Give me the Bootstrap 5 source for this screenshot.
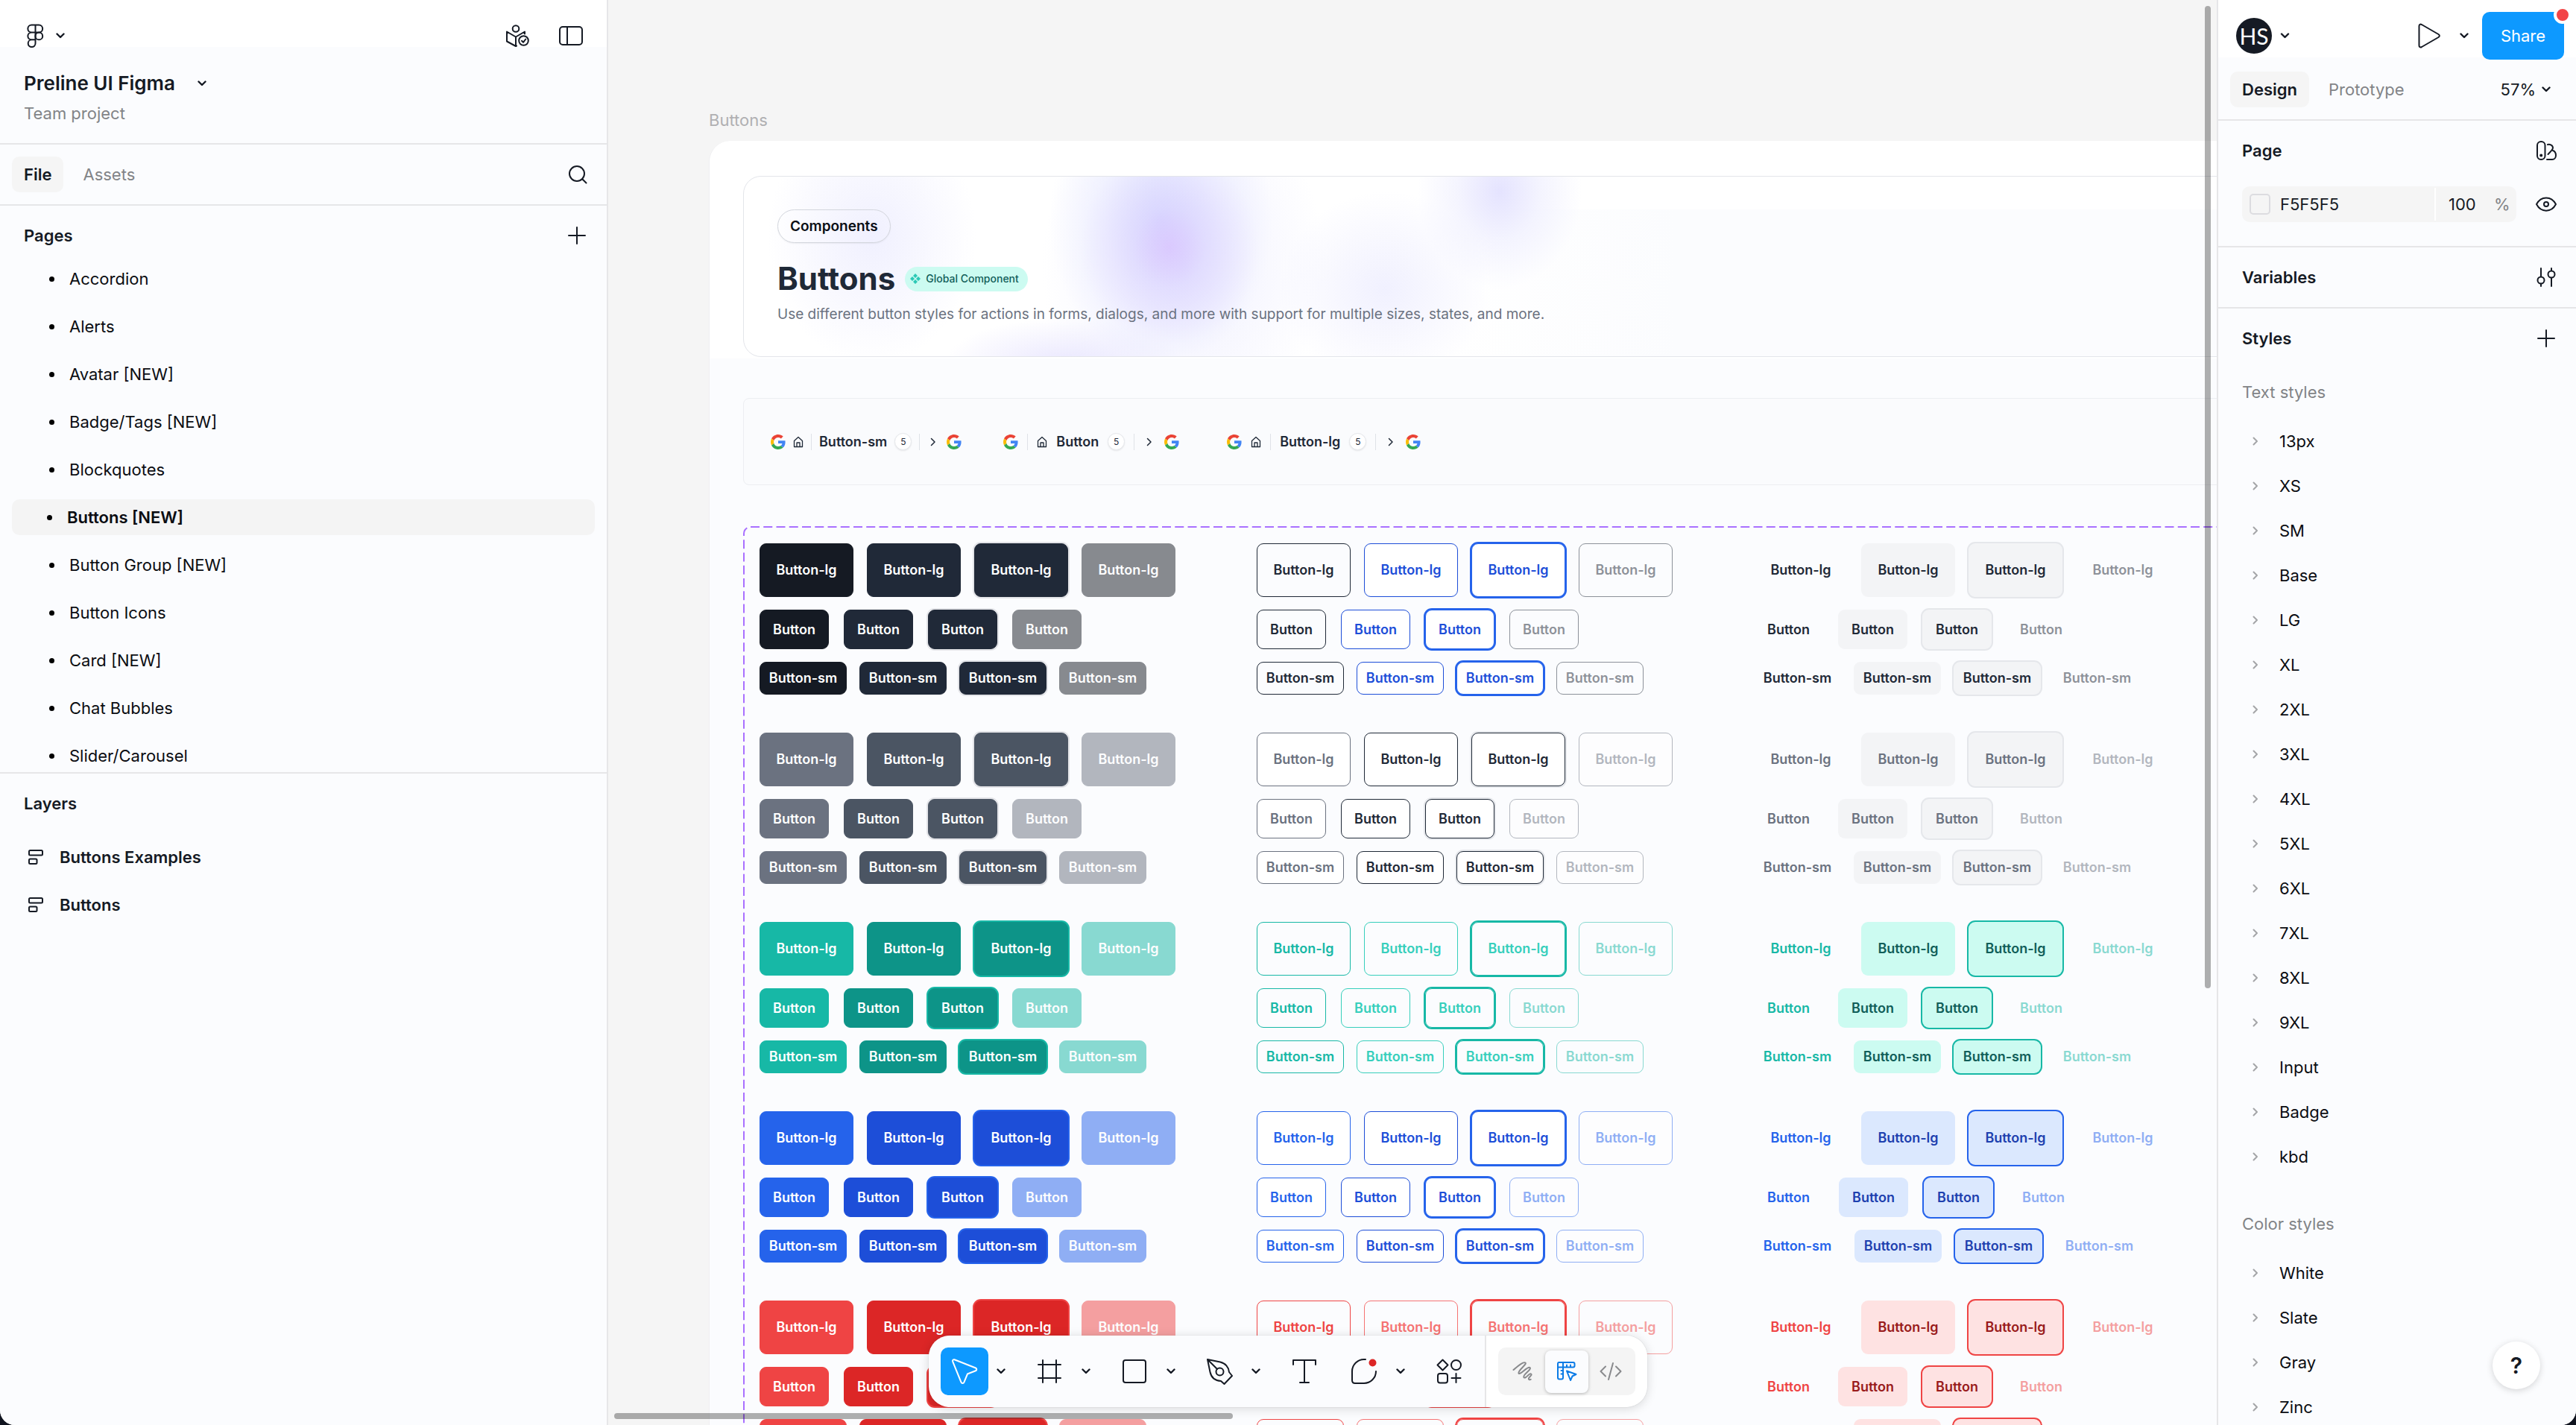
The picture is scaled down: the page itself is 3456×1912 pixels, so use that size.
<!DOCTYPE html>
<html lang="en">
<head>
<meta charset="utf-8">
<meta name="viewport" content="width=device-width, initial-scale=1">
<title>Preline UI Figma</title>
<link href="https://cdn.jsdelivr.net/npm/bootstrap@5.3.0/dist/css/bootstrap.min.css" rel="stylesheet">
<style>
:root{--ink:#151a24;--muted:#828487;--panel:#fbfcfe;--line:#e6e6e8;--soft:#f5f5f5;--accent:#0d99ff}
body{font-family:Inter,"Liberation Sans",sans-serif;font-size:22px;line-height:32px;color:var(--ink);background:#10141f}
.app{background:var(--soft);border-radius:0 0 20px 20px}
svg{fill:none;stroke:currentColor;stroke-width:2;stroke-linecap:round;stroke-linejoin:round;display:block;flex:none}
button{font:inherit;color:inherit}
a{color:inherit;text-decoration:none}
.plain{background:none;border:0;padding:0}
.muted{color:var(--muted)}
.side{background:linear-gradient(#fff 63px,var(--panel) 63px);flex:none;z-index:3}
.side-left{width:816px;border-right:2px solid var(--line)}
.side-right{width:482px;border-left:2px solid var(--line);background:linear-gradient(#fff 77px,var(--panel) 77px)}
.rule{border-bottom:2px solid var(--line)}
.bar{height:48px}
.side-left .bar,.project{padding:0 26px 0 32px}
.side-right .bar{padding:0 26px 0 32px}
.side-left .topbar{padding-right:32px}
.topbar{height:64px;margin-top:16px}
.topbar-icons{gap:40px}
.project{padding-top:16px;padding-bottom:24px}
.project-name{font-size:26px;gap:30px}
.tab-pill{height:48px;padding:0 16px;border-radius:10px;font-weight:400;color:var(--muted)}
.tab-pill.active{background:var(--soft);color:var(--ink);font-weight:600}
.tab-bar{padding:16px 26px 16px 16px;gap:10px}
.pages{height:762px}
.page-list{margin-top:2px}
.page-list a{height:64px;padding-left:66px;gap:20px;color:#0b0d12}
.page-list a::before{content:"";width:7px;height:7px;border-radius:50%;background:#000}
.page-list a.current{height:48px;margin:8px 16px;padding-left:47px;border-radius:10px;background:#f4f4f4;font-weight:600}
.layer-list{margin-top:16px}
.layer-list a{height:64px;padding-left:38px;gap:22px;font-weight:600}
.avatar{width:48px;height:48px;border-radius:50%;background:var(--ink);color:#fff;font-family:Lato,sans-serif;font-size:30px;font-weight:400}
.present-more{margin:0 18px 0 26px}
.share{width:110px;height:64px;border-radius:10px;background:var(--accent);color:#fff;font-size:22px}
.share:hover{background:var(--accent);color:#fff}
.share-dot{width:24px;height:24px;border-radius:50%;background:#f24446;border:4px solid #fff;top:-8px;right:-10px}
.fill-row{padding:0 26px 0 32px;margin:24px 0 8px}
.fill-field{width:368px;height:48px;border-radius:10px;background:var(--soft)}
.swatch{flex:none;width:28px;height:28px;border:2px solid #dcdce0;border-radius:5px;margin:0 13px 0 10px}
.fill-field input{flex:none;border:0;background:none;padding:0;color:var(--ink);outline:0}
.fill-field .hex{width:207px}
.fill-field .alpha{width:80px;border-left:2px solid #fff;padding-left:17px;height:44px}
.style-head{height:48px;margin-top:24px;padding-left:32px}
.style-list{padding:12px 0}
.style-list a{height:60px;padding-left:46px;gap:28px;color:#0b0d12}
.style-list svg{color:#a4a5a8}
.help{width:64px;height:64px;border-radius:50%;right:48px;bottom:48px;background:#fff;font-size:30px;font-weight:600;box-shadow:0 2px 10px rgba(0,0,0,.16)}
.board{width:3200px;margin-left:135px;padding-top:145px}
.board-name{color:#b0b0b2;margin-bottom:12px}
.sheet{border-radius:28px 0 0 0;padding:47px 0 0 45px;background:linear-gradient(#fff 292px,var(--panel) 292px);border-left:1px solid #efeff1}
.sheet>*+*{margin-top:55px}
.hero{height:243px;padding:44px 45px;border:1px solid #e3e5ea;border-radius:24px;
background:
radial-gradient(120px 130px at 571px 95px,rgba(216,180,255,.5),rgba(216,196,254,.28) 40%,transparent),
radial-gradient(150px 190px at 560px 60px,rgba(199,205,254,.6),rgba(210,214,254,.3) 50%,transparent),
radial-gradient(190px 240px at 590px 120px,rgba(216,215,254,.5),rgba(224,224,254,.25) 50%,transparent),
radial-gradient(110px 130px at 1014px 20px,rgba(222,220,254,.8),rgba(228,228,254,.4) 50%,transparent),
radial-gradient(140px 130px at 860px 150px,rgba(226,226,254,.5),transparent),
radial-gradient(140px 170px at 172px 80px,rgba(230,230,254,.6),transparent),
radial-gradient(160px 60px at 430px 250px,rgba(220,216,254,.6),transparent),
linear-gradient(90deg,transparent,var(--panel) 300px) 950px 44px no-repeat,#fff}
.hero-pill{height:45px;padding:0 16px;border:1px solid #d3d6dd;border-radius:23px;font-size:19px;font-weight:600;color:#0b0f16;box-shadow:0 1px 2px rgba(0,0,0,.06)}
.hero-row{height:50px;margin-top:23px;gap:13px}
.hero-row h1{font-size:42px;line-height:50px;font-weight:700;color:#1f2937;margin:0}
.global{height:33px;border-radius:17px;padding:0 12px 0 7px;gap:7px;background:#ccfbf1;color:#115e59;font-size:14px;font-weight:500}
.hero p{margin:9px 0 0;line-height:28px;font-size:19px;font-weight:400;color:#6b7280}
.sample{height:117px;padding-left:36px;border:1px solid #eceef2;border-radius:8px;background:#fafbfd;color:#1f2937}
.sample-item{gap:10px}
.sample-item+.sample-item{margin-left:56px;gap:12px}
.sample-item+.sample-item+.sample-item{margin-left:64px}
.sample-item strong{font-size:18px;font-weight:600}
.sample-item i{width:1px;height:22px;background:#dfe2e7}
.sample-item svg{stroke-width:1.5}
.count{width:23px;height:23px;border-radius:50%;border:1px solid #e5e7eb;background:#fff;font-size:12px;box-shadow:0 1px 2px rgba(0,0,0,.08)}
.kit{height:1500px;padding:23px 22px;position:relative}
.kit-frame{position:absolute;inset:0;width:100%;height:100%;color:#a970ff}
.kit-grid{display:grid;grid-template-columns:repeat(3,667px);row-gap:51px;position:relative}
.kit-cell{display:flex;flex-direction:column;gap:17px}
.kit-cell>div{display:flex}
.row-lg{gap:18px}.row-md{gap:20px}.row-sm{gap:17px}
.ghost.blue .row-md{gap:21px}.ghost.blue .row-sm{gap:18px}
.kit-cell .btn{--bs-btn-font-size:18px;--bs-btn-line-height:20px;--bs-btn-font-weight:600;--bs-btn-padding-x:0;--bs-btn-padding-y:0;--bs-btn-border-radius:9px;--bs-btn-disabled-opacity:.5;flex:none;border-width:1px}
.row-lg .btn{width:126px;height:72px}
.row-md .btn{width:93px;height:53px}
.row-sm .btn{width:117px;height:44px}
.dark{--c:#151a23;--h:#202938;--r:#e3e4e8;--o:#1f2937;--oh:#1d4ed8;--or:#2563eb;--s:#f3f4f6;--st:#1f2937;--g:#1f2937;--gr:#e5e7eb;--ob:transparent;--obh:#fff}
.gray{--c:#6b7280;--h:#4b5563;--r:#e3e4e8;--o:#6b7280;--oh:#1f2937;--or:#e5e7eb;--s:#f3f4f6;--st:#6b7280;--g:#6b7280;--gr:#e5e7eb;--ob:#fff;--obh:#fff}
.teal{--c:#17b8a6;--h:#0d9488;--r:#17b8a6;--o:#17b8a6;--oh:#37cfbc;--or:#17b8a6;--s:#ccfbf1;--st:#115e59;--g:#17b8a6;--gr:#17b8a6;--ob:transparent;--obh:transparent}
.blue{--c:#2563eb;--h:#1d4ed8;--r:#2563eb;--o:#2563eb;--oh:#1d4ed8;--or:#2563eb;--s:#dbe8fe;--st:#1e40af;--g:#2563eb;--gr:#2563eb;--ob:#fff;--obh:#fff}
.red{--c:#ef4444;--h:#dc2626;--r:#ef4444;--o:#ef4444;--oh:#f57373;--or:#ef4444;--s:#fee2e2;--st:#991b1b;--g:#ef4444;--gr:#ef4444;--ob:transparent;--obh:transparent}
.solid .btn{color:#fff;background:var(--c);border-color:var(--c)}
.solid .is-hover,.solid .is-focus{background:var(--h);border-color:var(--h)}
.solid .is-focus{box-shadow:0 0 0 2px var(--r)}
.line .btn{color:var(--o);border-color:var(--o);background:var(--ob)}
.line .is-hover,.line .is-focus{color:var(--oh);border-color:var(--oh);background:var(--obh)}
.line .is-focus{box-shadow:0 0 0 2px var(--or);border-color:var(--or)}
.line.gray .is-focus{border-color:var(--oh)}
.ghost .btn{color:var(--g);border-color:transparent;background:none}
.ghost .is-hover,.ghost .is-focus{color:var(--st);background:var(--s)}
.ghost .is-focus{box-shadow:0 0 0 2px var(--gr)}
.thumb-y{position:absolute;width:8px;height:1318px;top:8px;right:8px;border-radius:4px;background:rgba(0,0,0,.31);z-index:2}
.thumb-x{position:absolute;width:830px;height:8px;left:8px;bottom:8px;border-radius:4px;background:rgba(0,0,0,.31);z-index:2}
.tools{position:absolute;z-index:2;bottom:24px;left:430px;height:96px;border-radius:28px;background:linear-gradient(90deg,var(--panel) 747px,#fff 747px);box-shadow:0 2px 14px rgba(0,0,0,.15),0 0 1px rgba(0,0,0,.3);padding:16px}
.tool{width:64px;height:64px;border-radius:10px}
.tool.active{background:var(--accent);color:#fff}
.tool-more{width:34px;height:64px;margin-right:16px}
.tools-sep{width:2px;height:96px;margin:-16px 16px;background:var(--line)}
.modes{width:184px;height:64px;border-radius:10px;background:#f4f4f4;color:#88898c;padding:0 4px}
.modes button{width:58px;height:57px;border-radius:8px}
.modes .active{background:var(--panel);color:#0a7be6;box-shadow:0 1px 4px rgba(0,0,0,.25)}
</style>
</head>
<body class="vh-100 overflow-hidden">
<svg class="d-none" aria-hidden="true">
<symbol id="chev" viewBox="0 0 12 8"><path d="M1.5 1.5 6 6l4.500-4.500" stroke-width="2.400"/></symbol>
<symbol id="right" viewBox="0 0 8 12"><path d="M1.500 1.500 6 6l-4.500 4.500"/></symbol>
<symbol id="plus" viewBox="0 0 28 28"><path d="M14 3v22M3 14h22"/></symbol>
<symbol id="layer" viewBox="0 0 20 20"><rect x="1" y="1" width="18" height="6.500" rx="1.500"/><rect x="1" y="12.500" width="10.500" height="6.500" rx="1.500"/></symbol>
<symbol id="goog" viewBox="0 0 48 48"><g stroke="none"><path fill="#EA4335" d="M24 9.500c3.540 0 6.710 1.220 9.210 3.600l6.850-6.850C35.900 2.380 30.470 0 24 0 14.620 0 6.510 5.380 2.560 13.220l7.980 6.190C12.430 13.720 17.740 9.500 24 9.500z"/><path fill="#4285F4" d="M46.980 24.550c0-1.570-.15-3.090-.38-4.550H24v9.020h12.940c-.58 2.960-2.260 5.480-4.780 7.180l7.730 6c4.510-4.180 7.090-10.360 7.090-17.650z"/><path fill="#FBBC05" d="M10.530 28.590c-.48-1.450-.76-2.990-.76-4.590s.27-3.140.76-4.590l-7.980-6.190C.92 16.460 0 20.120 0 24c0 3.880.92 7.540 2.560 10.780l7.970-6.190z"/><path fill="#34A853" d="M24 48c6.480 0 11.930-2.130 15.890-5.810l-7.730-6c-2.150 1.450-4.920 2.300-8.160 2.300-6.260 0-11.570-4.220-13.470-9.910l-7.980 6.190C6.510 42.620 14.620 48 24 48z"/></g></symbol>
<symbol id="home" viewBox="0 0 14 16"><path d="M1.500 6.500 7 1.500l5.500 5v8h-11zM5 14.500V9h4v5.500" stroke-width="1.300"/></symbol>
</svg>

<div class="app d-flex h-100 overflow-hidden">
<aside class="side side-left d-flex flex-column">
  <div class="bar topbar d-flex align-items-center">
    <button class="plain d-flex align-items-center gap-3 ms-1" aria-label="Main menu">
      <svg width="23" height="33" viewBox="0 0 23 33"><path d="M11.500 1.500H6.300a4.900 4.900 0 0 0 0 9.900h5.200zM11.500 1.500h4.700a4.900 4.900 0 0 1 0 9.900h-4.700zM11.500 11.400H6.300a4.900 4.900 0 0 0 0 9.900h5.200zM11.500 21.300H6.300a4.900 4.900 0 1 0 5.200 5z"/><circle cx="16.300" cy="16.400" r="4.900"/></svg>
      <svg width="12" height="8"><use href="#chev"/></svg>
    </button>
    <div class="topbar-icons d-flex align-items-center ms-auto">
      <button class="plain" aria-label="Dev resources">
        <svg width="32" height="30" viewBox="0 0 32 30"><circle cx="14" cy="5.500" r="4.300"/><path d="M15 28.500 14 29 2 22.500v-13l12 7 12-7v3M14 16.500V29"/><circle cx="24.500" cy="21.500" r="6.300"/><path d="m22 21.800 2 2 3.300-4.300"/></svg>
      </button>
      <button class="plain" aria-label="Toggle panels">
        <svg width="32" height="26" viewBox="0 0 32 26"><rect x="1" y="1" width="30" height="24" rx="4"/><path d="M11 1v24"/></svg>
      </button>
    </div>
  </div>
  <div class="project rule">
    <button class="plain d-flex align-items-center project-name fw-semibold"><span>Preline UI Figma</span><svg width="12" height="8"><use href="#chev"/></svg></button>
    <div class="muted mt-2">Team project</div>
  </div>
  <div class="rule d-flex align-items-center tab-bar">
    <button class="plain tab-pill active">File</button>
    <button class="plain tab-pill">Assets</button>
    <button class="plain ms-auto" aria-label="Search"><svg width="26" height="26" viewBox="0 0 26 26"><circle cx="12" cy="12" r="10"/><path d="m19.500 19.500 5 5"/></svg></button>
  </div>
  <section class="pages rule overflow-hidden pt-3">
    <div class="bar d-flex align-items-center"><span class="fw-semibold">Pages</span><button class="plain ms-auto" aria-label="Add page"><svg width="28" height="28"><use href="#plus"/></svg></button></div>
    <nav class="page-list" id="pageList"></nav>
  </section>
  <section class="pt-3">
    <div class="bar d-flex align-items-center fw-semibold">Layers</div>
    <nav class="layer-list">
      <a href="#" class="d-flex align-items-center"><svg width="20" height="20"><use href="#layer"/></svg>Buttons Examples</a>
      <a href="#" class="d-flex align-items-center"><svg width="20" height="20"><use href="#layer"/></svg>Buttons</a>
    </nav>
  </section>
</aside>

<main class="flex-grow-1 position-relative overflow-hidden">
  <div class="board">
    <div class="board-name">Buttons</div>
    <div class="sheet">
      <header class="hero">
        <span class="hero-pill d-inline-flex align-items-center align-top">Components</span>
        <div class="hero-row d-flex align-items-center"><h1>Buttons</h1>
          <span class="global d-flex align-items-center"><svg width="14" height="14" viewBox="0 0 14 14"><g fill="#2cc9b6" stroke="none"><path d="m7 0 3 3-3 3-3-3zM7 8l3 3-3 3-3-3zM3 4l3 3-3 3-3-3zM11 4l3 3-3 3-3-3z"/></g></svg>Global Component</span>
        </div>
        <p>Use different button styles for actions in forms, dialogs, and more with support for multiple sizes, states, and more.</p>
      </header>
      <div class="sample d-flex align-items-center">
        <div class="sample-item d-flex align-items-center"><svg width="20" height="20"><use href="#goog"/></svg><svg width="14" height="16"><use href="#home"/></svg><i></i><strong>Button-sm</strong><span class="count d-flex align-items-center justify-content-center">5</span><i></i><svg class="mx-1" width="8" height="12"><use href="#right"/></svg><svg width="20" height="20"><use href="#goog"/></svg></div>
        <div class="sample-item d-flex align-items-center"><svg width="20" height="20"><use href="#goog"/></svg><i></i><svg width="14" height="16"><use href="#home"/></svg><strong>Button</strong><span class="count d-flex align-items-center justify-content-center">5</span><i></i><svg class="mx-1" width="8" height="12"><use href="#right"/></svg><svg width="20" height="20"><use href="#goog"/></svg></div>
        <div class="sample-item d-flex align-items-center"><svg width="20" height="20"><use href="#goog"/></svg><svg width="14" height="16"><use href="#home"/></svg><i></i><strong>Button-lg</strong><span class="count d-flex align-items-center justify-content-center">5</span><i></i><svg class="mx-1" width="8" height="12"><use href="#right"/></svg><svg width="20" height="20"><use href="#goog"/></svg></div>
      </div>
      <div class="kit">
        <svg class="kit-frame" aria-hidden="true"><rect x="1" y="1" width="3150" height="1498" rx="9" stroke-dasharray="12 5.250" stroke-linecap="butt"/></svg>
        <div class="kit-grid" id="kitGrid"></div>
      </div>
    </div>
  </div>
  <div class="thumb-y"></div>
  <div class="thumb-x"></div>
  <div class="tools d-flex">
    <button class="plain tool active d-flex align-items-center justify-content-center" aria-label="Move"><svg width="36" height="36" viewBox="0 0 36 36"><path d="M4.500 2.300 33 13.500c1.800.8 1.700 3-.1 3.700L22 21.500l-4.600 11.200c-.8 1.800-3.200 1.700-3.900-.1L2.200 4.800c-.6-1.700.7-3.100 2.300-2.500z"/></svg></button>
    <button class="plain tool-more d-flex align-items-center justify-content-center" aria-label="Move tools"><svg width="12" height="8"><use href="#chev"/></svg></button>
    <button class="plain tool d-flex align-items-center justify-content-center" aria-label="Frame"><svg width="32" height="32" viewBox="0 0 32 32"><path d="M7 1v30M25 1v30M1 7h30M1 25h30"/></svg></button>
    <button class="plain tool-more d-flex align-items-center justify-content-center" aria-label="Region tools"><svg width="12" height="8"><use href="#chev"/></svg></button>
    <button class="plain tool d-flex align-items-center justify-content-center" aria-label="Rectangle"><svg width="32" height="32" viewBox="0 0 32 32"><rect x="1" y="1" width="30" height="30" rx="3"/></svg></button>
    <button class="plain tool-more d-flex align-items-center justify-content-center" aria-label="Shape tools"><svg width="12" height="8"><use href="#chev"/></svg></button>
    <button class="plain tool d-flex align-items-center justify-content-center" aria-label="Pen"><svg width="36" height="36" viewBox="0 0 36 36"><path d="M2 2 19 5.500c7 1.500 11.500 7 12 13.500l4 5L24.500 35 20 31C12 30.500 7 26 5.500 19L2 2zM2 2l13 13"/><circle cx="18.500" cy="18.500" r="5"/></svg></button>
    <button class="plain tool-more d-flex align-items-center justify-content-center" aria-label="Drawing tools"><svg width="12" height="8"><use href="#chev"/></svg></button>
    <button class="plain tool me-3 d-flex align-items-center justify-content-center" aria-label="Text"><svg width="32" height="32" viewBox="0 0 32 32"><path d="M1 7V1h30v6M16 1v30M10 31h12"/></svg></button>
    <button class="plain tool d-flex align-items-center justify-content-center" aria-label="Comment"><svg width="36" height="36" viewBox="0 0 36 36"><path d="M20 2h-1.500A16 16 0 0 0 2 18v12c0 2.500 1.500 4 4 4h12a16 16 0 0 0 16-16"/><circle cx="29.500" cy="6.500" r="5" fill="#dc2626" stroke="none"/></svg></button>
    <button class="plain tool-more d-flex align-items-center justify-content-center" aria-label="Comment tools"><svg width="12" height="8"><use href="#chev"/></svg></button>
    <button class="plain tool d-flex align-items-center justify-content-center" aria-label="Actions"><svg width="34" height="34" viewBox="0 0 34 34"><path d="m8.500 1.500 7 7-7 7-7-7zM26.500 20v12M20.500 26h12"/><circle cx="26.500" cy="8.500" r="6.500"/><rect x="2" y="20" width="13" height="12.500" rx="3"/></svg></button>
    <div class="tools-sep"></div>
    <div class="modes d-flex align-items-center justify-content-between">
      <button class="plain d-flex align-items-center justify-content-center" aria-label="Draw"><svg width="28" height="28" viewBox="0 0 28 28"><path d="M1.500 12C8 6.500 15 .5 17.500 2.500S7 13 8.500 16.500 20.500 6.500 23.500 9 13 19 15.500 22 22.500 15.500 25 17.500s-4.500 4.500-3 7c.8 1.300 2 .8 2.700.3"/></svg></button>
      <button class="plain active d-flex align-items-center justify-content-center" aria-label="Design"><svg width="28" height="28" viewBox="0 0 28 28"><path d="M3.500 2h19q2 0 2 2v2.500q0 2-2 2H9v14q0 2-2 2H4q-2 0-2-2V4q0-2 1.500-2M9 2v6.500H2M14 8V5.500M19 8V5.500M8.500 13H6.500M8.500 17.500H6.500M14 13.500l12.500 4.500-5 2.500-2.500 5.500z"/></svg></button>
      <button class="plain d-flex align-items-center justify-content-center" aria-label="Dev Mode"><svg width="30" height="26" viewBox="0 0 30 26"><path d="M8 6.500 1.500 13 8 19.500M22 6.500l6.500 6.500-6.500 6.500M18 2l-6 22"/></svg></button>
    </div>
  </div>
</main>

<aside class="side side-right position-relative overflow-hidden">
  <div class="topbar d-flex align-items-center ps-4 pe-3">
    <span class="avatar d-flex align-items-center justify-content-center">HS</span>
    <svg class="ms-2 mx-2" width="16" height="8" viewBox="-2 0 12 8"><path d="M1 1.500 5.500 6 10 1.500" stroke-width="2.400"/></svg>
    <button class="plain ms-auto" aria-label="Present"><svg width="30" height="34" viewBox="0 0 30 34"><path d="M1.500 4v26c0 2.200 1.600 3 3.500 2l22.500-13c1.800-1.200 1.800-2.800 0-4L5 2C3 1 1.500 1.800 1.500 4z"/></svg></button>
    <button class="plain present-more" aria-label="Present options"><svg width="12" height="8"><use href="#chev"/></svg></button>
    <button class="btn share position-relative p-0 border-0">Share<span class="share-dot position-absolute"></span></button>
  </div>
  <div class="rule d-flex align-items-center tab-bar">
    <button class="plain tab-pill active">Design</button>
    <button class="plain tab-pill">Prototype</button>
    <button class="plain ms-auto d-flex align-items-center me-2 gap-2">57%<svg width="12" height="8"><use href="#chev"/></svg></button>
  </div>
  <section class="rule pt-3 pb-4">
    <div class="bar d-flex align-items-center fw-semibold">Page<svg class="ms-auto" width="28" height="28" viewBox="0 0 28 28"><rect x="2" y="2" width="10.500" height="24" rx="5"/><circle cx="7.200" cy="20.500" r="1" fill="currentColor"/><path d="M16 6c3-.5 7 .5 7 4.500 0 2-1.500 3.500-6.500 8.500M23 14c3 1 4 4 4 6.500 0 3-2 5.500-5 5.500h-7"/></svg></div>
    <div class="fill-row d-flex align-items-center">
      <div class="fill-field d-flex align-items-center"><span class="swatch"></span><input class="hex" type="text" value="F5F5F5" aria-label="Page color"><input class="alpha" type="text" value="100" aria-label="Opacity"><span class="muted">%</span></div>
      <button class="plain ms-auto" aria-label="Toggle visibility"><svg width="28" height="20" viewBox="0 0 28 20"><path d="M1 10C7-1.500 21-1.500 27 10 21 21.500 7 21.500 1 10z"/><circle cx="14" cy="10" r="3"/></svg></button>
    </div>
  </section>
  <section class="rule py-3"><div class="bar d-flex align-items-center fw-semibold">Variables<svg class="ms-auto" width="28" height="26" viewBox="-1 0 28 26"><path d="M6 1v11M6 22v3M20 1v3M20 14v11"/><circle cx="6" cy="17" r="4.500"/><circle cx="20" cy="9" r="4.500"/></svg></div></section>
  <section class="pt-3">
    <div class="bar d-flex align-items-center fw-semibold">Styles<button class="plain ms-auto" aria-label="Add style"><svg width="28" height="28"><use href="#plus"/></svg></button></div>
    <div class="style-head muted d-flex align-items-center">Text styles</div>
    <nav class="style-list" id="textStyles"></nav>
    <div class="style-head muted d-flex align-items-center">Color styles</div>
    <nav class="style-list" id="colorStyles"></nav>
  </section>
  <button class="plain help position-absolute" aria-label="Help">?</button>
</aside>
</div>

<script src="https://cdn.jsdelivr.net/npm/bootstrap@5.3.0/dist/js/bootstrap.bundle.min.js"></script>
<script>
const pages = ["Accordion","Alerts","Avatar [NEW]","Badge/Tags [NEW]","Blockquotes","Buttons [NEW]","Button Group [NEW]","Button Icons","Card [NEW]","Chat Bubbles","Slider/Carousel"];
document.getElementById("pageList").innerHTML = pages.map(p => `<a href="#" class="d-flex align-items-center${p === "Buttons [NEW]" ? " current" : ""}">${p}</a>`).join("");
const styleRow = s => `<a href="#" class="d-flex align-items-center"><svg width="8" height="12"><use href="#right"/></svg>${s}</a>`;
document.getElementById("textStyles").innerHTML = ["13px","XS","SM","Base","LG","XL","2XL","3XL","4XL","5XL","6XL","7XL","8XL","9XL","Input","Badge","kbd"].map(styleRow).join("");
document.getElementById("colorStyles").innerHTML = ["White","Slate","Gray","Zinc"].map(styleRow).join("");
const sizes = [["lg","Button-lg"],["md","Button"],["sm","Button-sm"]];
const states = ["","is-hover","is-focus","off"];
let kit = "";
for (const tone of ["dark","gray","teal","blue","red"])
  for (const kind of ["solid","line","ghost"])
    kit += `<div class="kit-cell ${kind} ${tone}">` + sizes.map(([size, label]) =>
      `<div class="row-${size}">` + states.map(s => `<button class="btn ${s}"${s === "off" ? " disabled" : ""}>${label}</button>`).join("") + "</div>").join("") + "</div>";
document.getElementById("kitGrid").innerHTML = kit;
</script>
</body>
</html>
